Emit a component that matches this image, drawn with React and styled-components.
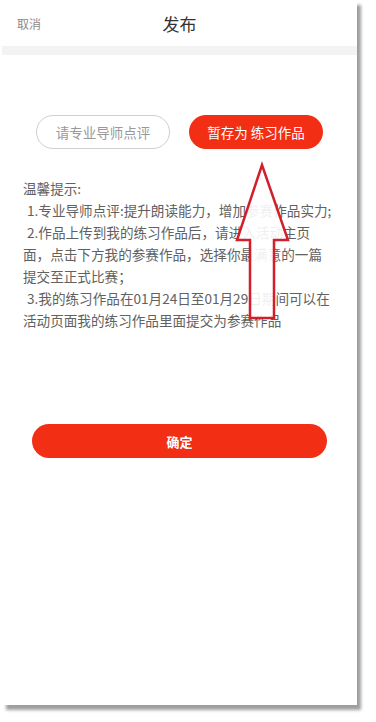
import React from "react";
import styled, { createGlobalStyle } from "styled-components";

const Global = createGlobalStyle`
  html, body { margin: 0; padding: 0; background: #ffffff; }
  body { font-family: "Noto Sans CJK SC", "Noto Sans", sans-serif; }
  * { box-sizing: border-box; }
`;

const Page = styled.div`
  width: 376px;
  height: 722px;
  padding: 0 0 0 2px;
  background: #fff;
`;

const Card = styled.div`
  width: 355px;
  height: 705px;
  background: #fff;
  display: flex;
  flex-direction: column;
  box-shadow: 4px 5px 3px rgba(0, 0, 0, 0.38);
`;

const Header = styled.div`
  height: 46px;
  display: grid;
  grid-template-columns: 1fr auto 1fr;
  align-items: center;
  padding: 0 15px;
`;

const Cancel = styled.span`
  font-size: 12px;
  color: #8a8a8a;
  justify-self: start;
`;

const Title = styled.span`
  font-size: 17px;
  color: #333;
  font-weight: 400;
`;

const Band = styled.div`
  height: 9px;
  background: #f3f3f3;
`;

const Content = styled.div`
  position: relative;
  flex: 1;
  padding-top: 60px;
  display: flex;
  flex-direction: column;
`;

const ButtonRow = styled.div`
  display: flex;
  justify-content: center;
  gap: 19px;
`;

const PillButton = styled.button`
  width: 134px;
  height: 34px;
  border-radius: 17px;
  font-family: inherit;
  font-size: 13.5px;
  display: flex;
  align-items: center;
  justify-content: center;
  padding: 0;
  border: ${(p) => (p.$primary ? "none" : "1.5px solid #cfcfcf")};
  background: ${(p) => (p.$primary ? "#f22e14" : "#fff")};
  color: ${(p) => (p.$primary ? "#fff" : "#999")};
`;

const Tips = styled.div`
  margin-top: 28px;
  padding-left: 21px;
  font-size: 13.6px;
  line-height: 22px;
  color: #616161;
`;

const Line = styled.div`
  white-space: nowrap;
  padding-left: ${(p) => (p.$indent ? "4px" : "0")};
`;

const Confirm = styled.button`
  margin: 93px auto 0;
  width: 295px;
  height: 34px;
  border-radius: 17px;
  border: none;
  background: #f22e14;
  color: #fff;
  font-family: inherit;
  font-size: 13px;
  font-weight: 600;
  padding: 0;
`;

const ArrowSvg = styled.svg`
  position: absolute;
  left: 0;
  top: 0;
  pointer-events: none;
`;

export default function App() {
  return (
    <Page>
      <Global />
      <Card>
        <Header>
          <Cancel>取消</Cancel>
          <Title>发布</Title>
          <span />
        </Header>
        <Band />
        <Content>
          <ButtonRow>
            <PillButton>请专业导师点评</PillButton>
            <PillButton $primary>暂存为 练习作品</PillButton>
          </ButtonRow>
          <Tips>
            <Line>温馨提示:</Line>
            <Line $indent>1.专业导师点评:提升朗读能力，增加参赛作品实力;</Line>
            <Line $indent>2.作品上传到我的练习作品后，请进入活动主页</Line>
            <Line>面，点击下方我的参赛作品，选择你最满意的一篇</Line>
            <Line>提交至正式比赛；</Line>
            <Line $indent>3.我的练习作品在01月24日至01月29日期间可以在</Line>
            <Line>活动页面我的练习作品里面提交为参赛作品</Line>
          </Tips>
          <Confirm>确定</Confirm>
          <ArrowSvg width="355" height="400" viewBox="0 0 355 400">
            <polygon
              points="260,110 286,185 272,185 272,263 248,263 248,185 235,185"
              fill="#fff"
              fillOpacity="0.9"
              stroke="#d21f2c"
              strokeWidth="2.5"
              strokeLinejoin="miter"
            />
          </ArrowSvg>
        </Content>
      </Card>
    </Page>
  );
}
